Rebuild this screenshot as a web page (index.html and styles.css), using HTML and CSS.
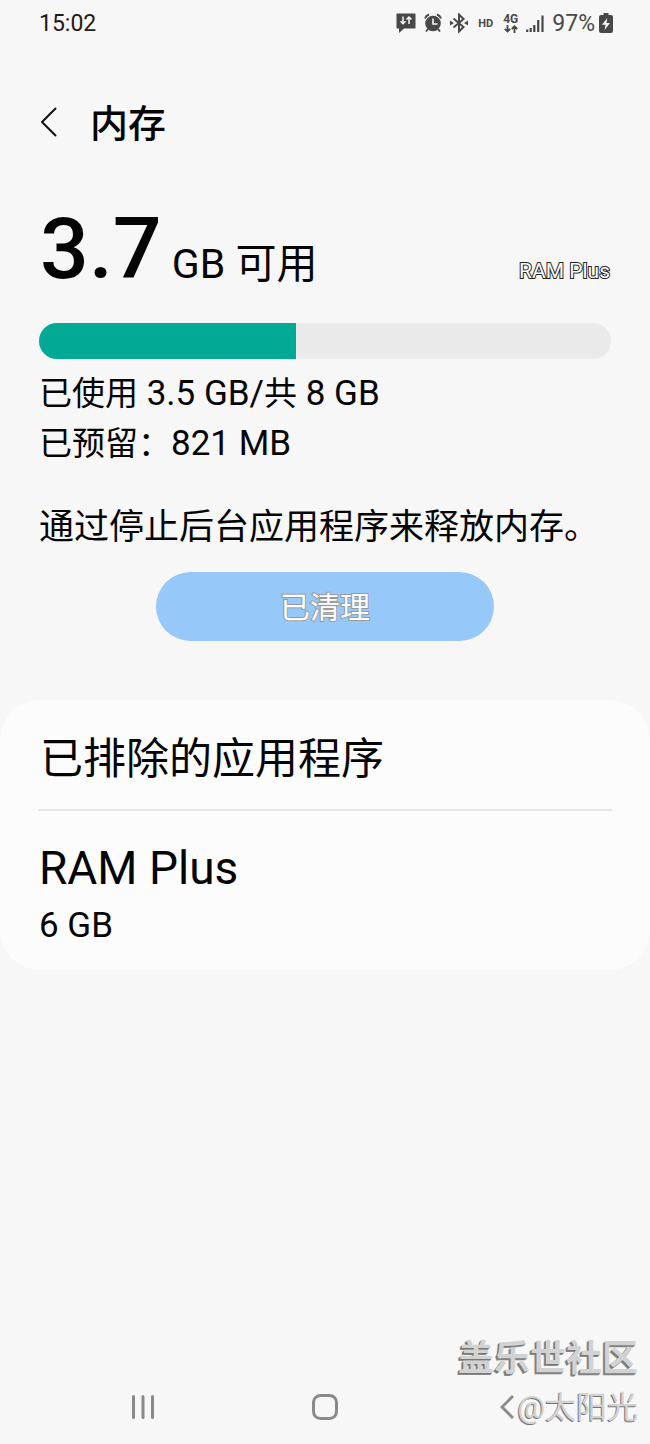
FILE: index.html
```html
<!DOCTYPE html>
<html lang="zh-CN">
<head>
<meta charset="utf-8">
<meta name="viewport" content="width=device-width, initial-scale=1">
<title>内存</title>
<link rel="stylesheet" href="styles.css">
</head>
<body>
<div class="screen">
  <div class="status">
    <time class="clock">15:02</time>
    <div class="indicators">
      <svg class="message" width="20" height="20" viewBox="0 0 20 20" aria-hidden="true">
        <path d="M1 0.5h18q.5 0 .5.5v14q0 .5-.5.5H8L3 20v-4.500H1q-.5 0-.5-.5V1q0-.5.5-.5z" fill="#484848"/>
        <path d="M7 3.500v7M4.500 8.300 7 10.800l2.500-2.500M13 11V4M10.500 6.500 13 4l2.500 2.500" fill="none" stroke="#f7f7f7" stroke-width="1.500"/>
      </svg>
      <svg class="alarm" width="18" height="20" viewBox="0 0 18 20" aria-hidden="true">
        <circle cx="9" cy="10.500" r="7.800" fill="#484848"/>
        <path d="M1 5.500Q2 2.500 5 1.500M17 5.500Q16 2.500 13 1.500M4 16l-2 2.500M14 16l2 2.500" fill="none" stroke="#484848" stroke-width="2"/>
        <path d="M9 5.500v5.500h4.500" fill="none" stroke="#f7f7f7" stroke-width="1.600"/>
      </svg>
      <svg class="bluetooth" width="18" height="20" viewBox="0 0 18 20" aria-hidden="true">
        <path d="M3.500 5.500 13.500 14 9 18.500v-17L13.500 6l-10 8.500" fill="none" stroke="#484848" stroke-width="2"/>
        <path d="M0 7.500l4 2.500-4 2.500zM18 7.500 14 10l4 2.500z" fill="#484848"/>
      </svg>
      <span class="hd">HD</span>
      <span class="network">
        <span class="generation">4G</span>
        <svg width="14" height="8" viewBox="0 0 14 8" aria-hidden="true">
          <path d="M3.500 0v6.500M.8 3.800l2.700 2.700 2.700-2.700M10.500 8V1.200M7.800 4l2.700-2.700L13.200 4" fill="none" stroke="#484848" stroke-width="1.800"/>
        </svg>
      </span>
      <svg class="signal" width="18" height="17" viewBox="0 0 18 17" aria-hidden="true">
        <path d="M1.200 17v-2.500M4.700 17v-4M8.300 17v-7M12.200 17V5M16.500 17V0.500" stroke="#484848" stroke-width="2.200"/>
      </svg>
      <span class="percent">97%</span>
      <svg class="battery" width="14" height="20" viewBox="0 0 14 20" aria-hidden="true">
        <path d="M4.500 0h5v2H12q2 0 2 2v14q0 2-2 2H2q-2 0-2-2V4q0-2 2-2h2.500z" fill="#484848"/>
        <path d="M8.300 5 3 11.800h3.500L5.600 17 11 10H7.500z" fill="#f7f7f7"/>
      </svg>
    </div>
  </div>

  <header class="header">
    <button class="back" type="button" aria-label="返回">
      <svg width="17" height="30" viewBox="0 0 17 30" aria-hidden="true">
        <path d="M15.500 1.500 2 15l13.500 13.500" fill="none" stroke="#111" stroke-width="2" stroke-linecap="round" stroke-linejoin="round"/>
      </svg>
    </button>
    <h1 class="title">内存</h1>
  </header>

  <main>
    <section class="memory">
      <div class="summary">
        <p class="available"><strong class="amount">3.7</strong> GB 可用</p>
        <span class="ram-label">RAM Plus</span>
      </div>
      <div class="bar" role="img" aria-label="已使用 3.5 GB/共 8 GB"><div class="bar-used" style="width:45%"></div></div>
      <p class="usage"><span class="zh">已使用</span> 3.5 GB/<span class="zh">共</span> 8 GB</p>
      <p class="usage"><span class="zh">已预留：</span>821 MB</p>
      <p class="hint">通过停止后台应用程序来释放内存。</p>
      <button class="clean" type="button">已清理</button>
    </section>

    <section class="card">
      <a class="row excluded" href="#excluded">已排除的应用程序</a>
      <a class="row ram-plus" href="#ram-plus">
        <span class="row-title">RAM Plus</span>
        <span class="row-value">6 GB</span>
      </a>
    </section>
  </main>

  <footer class="footer">
    <nav class="nav">
      <button type="button" aria-label="最近使用">
        <svg width="24" height="26" viewBox="0 0 24 26" aria-hidden="true">
          <path d="M2.500 2.500v21M12 2.500v21M21.500 2.500v21" stroke="#8a8a8a" stroke-width="3" stroke-linecap="round"/>
        </svg>
      </button>
      <button type="button" aria-label="主屏幕">
        <svg width="26" height="26" viewBox="0 0 26 26" aria-hidden="true">
          <rect x="1.500" y="1.500" width="23" height="23" rx="7" fill="none" stroke="#8a8a8a" stroke-width="3"/>
        </svg>
      </button>
      <button type="button" aria-label="返回上一页">
        <svg width="14" height="26" viewBox="0 0 14 26" aria-hidden="true">
          <path d="M13 2 2 13l11 11" fill="none" stroke="#8a8a8a" stroke-width="3"/>
        </svg>
      </button>
    </nav>
    <div class="watermark">
      <span class="community">盖乐世社区</span>
      <span class="author">@太阳光</span>
    </div>
  </footer>
</div>
</body>
</html>
```
FILE: styles.css
```css
* {
  box-sizing: border-box;
}

body {
  margin: 0;
  background: #f7f7f7;
  color: #050505;
  font-family: Roboto, "Noto Sans CJK SC", sans-serif;
}

h1,
p {
  margin: 0;
}

button {
  padding: 0;
  border: 0;
  background: none;
  font-family: inherit;
}

svg {
  display: block;
  flex: none;
}

.screen {
  display: flex;
  flex-direction: column;
  min-height: 100vh;
}

.status {
  display: flex;
  align-items: center;
  justify-content: space-between;
  height: 46px;
  padding: 0 37px 0 39px;
}

.clock {
  font-size: 23px;
  color: #1c1c1c;
}

.indicators {
  display: flex;
  align-items: center;
  gap: 8px;
  color: #484848;
}

.hd {
  padding: 0 2px;
  font-size: 11px;
  font-weight: 700;
}

.network {
  display: flex;
  flex-direction: column;
  align-items: center;
}

.generation {
  font-size: 12px;
  font-weight: 700;
  line-height: 12px;
}

.percent {
  font-size: 23px;
}

.battery {
  margin-left: -4px;
}

.header {
  display: flex;
  align-items: center;
  gap: 33px;
  height: 152px;
  padding: 0 40px;
}

.title {
  padding-bottom: 4px;
  font-size: 38px;
  font-weight: 500;
}

.memory {
  padding: 0 39px;
}

.summary {
  display: flex;
  align-items: baseline;
  justify-content: space-between;
  padding: 1px 1px 0;
}

.available {
  font-size: 41px;
  line-height: 100px;
}

.amount {
  font-size: 86px;
  font-weight: 500;
}

.ram-label {
  font-size: 21px;
  color: #fff;
  -webkit-text-stroke: 2px #222;
  paint-order: stroke fill;
}

.bar {
  height: 36px;
  margin: 9px 0 10px;
  border-radius: 18px;
  overflow: hidden;
  background: #eaeaea;
}

.bar-used {
  height: 100%;
  background: #02a995;
}

.usage {
  font-size: 35px;
  line-height: 50px;
}

.zh {
  font-size: 33px;
}

.hint {
  margin-top: 35px;
  font-size: 35px;
  line-height: 48px;
  white-space: nowrap;
}

.clean {
  display: block;
  width: 59%;
  height: 69px;
  margin: 20px auto 0;
  padding-bottom: 4px;
  border-radius: 35px;
  background: #96c8f9;
  color: #fff;
  font-size: 30px;
  -webkit-text-stroke: 2px #999;
  paint-order: stroke fill;
}

.card {
  margin-top: 59px;
  padding: 0 38px;
  border-radius: 40px;
  background: #fcfcfc;
}

.row {
  display: flex;
  flex-direction: column;
  justify-content: center;
  color: inherit;
  text-decoration: none;
}

.excluded {
  height: 111px;
  padding: 0 2px;
  border-bottom: 2px solid #e6e6e6;
  font-size: 43px;
}

.ram-plus {
  height: 159px;
  padding: 14px 1px 8px;
}

.row-title {
  font-size: 46px;
  line-height: 64px;
}

.row-value {
  font-size: 35px;
  line-height: 52px;
}

.footer {
  position: relative;
  margin-top: auto;
}

.nav {
  display: grid;
  grid-template-columns: repeat(3, 1fr);
  height: 74px;
  padding: 0 8%;
}

.nav button {
  display: flex;
  align-items: center;
  justify-content: center;
}

.watermark {
  position: absolute;
  right: 12px;
  bottom: 12px;
  display: flex;
  flex-direction: column;
  align-items: flex-end;
  color: #d2d2d2;
  text-shadow: -1px 1px #777, -2px 2px #888;
}

.community {
  font-size: 36px;
  font-weight: 700;
  line-height: 50px;
}

.author {
  font-size: 31px;
  line-height: 48px;
  text-shadow: -1px 1px #777;
}
```
